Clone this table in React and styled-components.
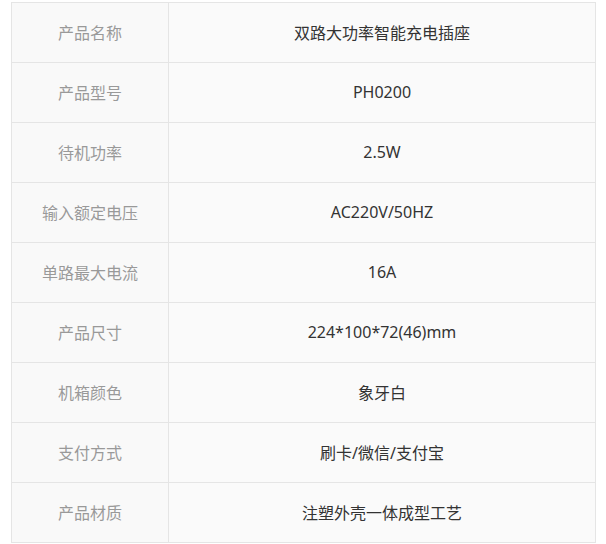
import React from "react";
import styled, { createGlobalStyle } from "styled-components";

const Global = createGlobalStyle`
  html, body { margin: 0; padding: 0; background: #ffffff; }
  * { box-sizing: border-box; }
`;

const Page = styled.div`
  padding: 2px 0 0 11px;
  font-family: "Microsoft YaHei", "Noto Sans", "Noto Sans CJK SC", sans-serif;
`;

const Table = styled.div`
  display: grid;
  grid-template-columns: 157px 427px;
  width: 585px;
  border-top: 1px solid #e5e5e5;
  border-left: 1px solid #e5e5e5;
`;

const Cell = styled.div`
  height: 60px;
  display: flex;
  align-items: center;
  justify-content: center;
  border-right: 1px solid #e5e5e5;
  border-bottom: 1px solid #e5e5e5;
  background: ${(p) => (p.$label ? "#f9f9f9" : "#fafafa")};
  color: ${(p) => (p.$label ? "#999999" : "#333333")};
  font-size: 16px;
  padding-bottom: 1px;
`;

const rows = [
  ["产品名称", "双路大功率智能充电插座"],
  ["产品型号", "PH0200"],
  ["待机功率", "2.5W"],
  ["输入额定电压", "AC220V/50HZ"],
  ["单路最大电流", "16A"],
  ["产品尺寸", "224*100*72(46)mm"],
  ["机箱颜色", "象牙白"],
  ["支付方式", "刷卡/微信/支付宝"],
  ["产品材质", "注塑外壳一体成型工艺"],
];

export default function App() {
  return (
    <Page>
      <Global />
      <Table>
        {rows.map(([k, v]) => (
          <React.Fragment key={k}>
            <Cell $label>{k}</Cell>
            <Cell>{v}</Cell>
          </React.Fragment>
        ))}
      </Table>
    </Page>
  );
}
